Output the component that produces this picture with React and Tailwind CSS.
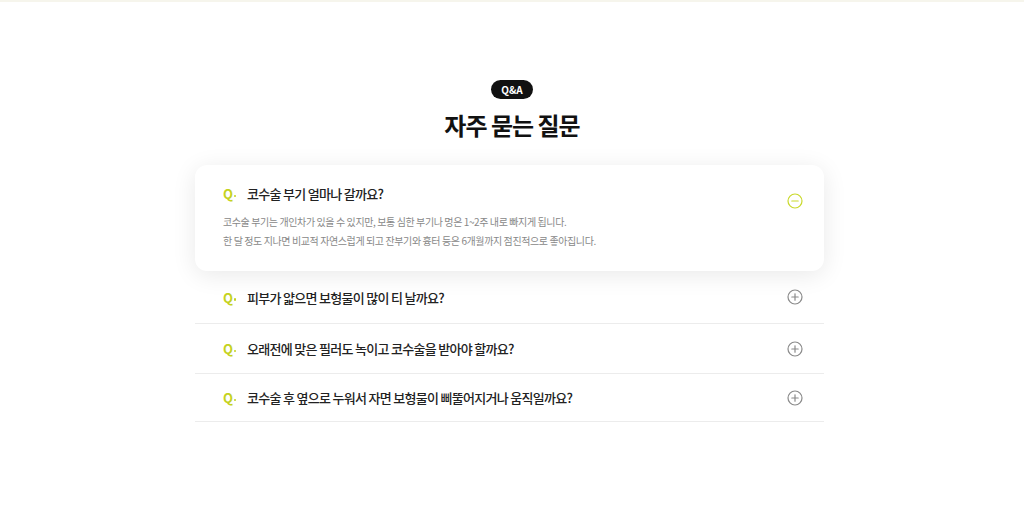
import { useState } from "react";

// ─── FAQ data ────────────────────────────────────────────────────────────────
const FAQS = [
  {
    q: "코수술 부기 얼마나 갈까요?",
    a: [
      "코수술 부기는 개인차가 있을 수 있지만, 보통 심한 부기나 멍은 1~2주 내로 빠지게 됩니다.",
      "한 달 정도 지나면 비교적 자연스럽게 되고 잔부기와 흉터 등은 6개월까지 점진적으로 좋아집니다.",
    ],
  },
  { q: "피부가 얇으면 보형물이 많이 티 날까요?", a: ["보형물의 종류와 크기를 피부 두께에 맞게 선택하면 자연스러운 결과를 얻을 수 있습니다."] },
  { q: "오래전에 맞은 필러도 녹이고 코수술을 받아야 할까요?", a: ["상담을 통해 필러 잔여 상태를 확인한 뒤 결정하게 됩니다."] },
  { q: "코수술 후 옆으로 누워서 자면 보형물이 삐뚤어지거나 움직일까요?", a: ["회복 초기에는 바른 자세로 주무시는 것을 권장드립니다."] },
];

const ToggleIcon = ({ open }) => {
  const c = open ? "#c9d92b" : "#8a8a8a";
  return (
    <svg width="16" height="16" viewBox="0 0 16 16" fill="none">
      <circle cx="8" cy="8" r="7" stroke={c} strokeWidth="1.2" />
      <path d="M4.8 8h6.4" stroke={c} strokeWidth="1.2" strokeLinecap="round" />
      {!open && <path d="M8 4.8v6.4" stroke={c} strokeWidth="1.2" strokeLinecap="round" />}
    </svg>
  );
};

const QMark = () => (
  <span className="flex items-end w-[24px] shrink-0 text-[13px] font-semibold leading-none text-[#c5d21f]">
    Q<span className="w-[2.5px] h-[2.5px] rounded-full bg-[#c5d21f] ml-[0.5px] mb-[3px]" />
  </span>
);

export default function App() {
  const [openIdx, setOpenIdx] = useState(0);

  return (
    <div
      className="w-[1024px] h-[520px] bg-white border-t-2 border-[#f6f5ec] flex flex-col items-center"
      style={{ fontFamily: '"Noto Sans CJK KR", "Noto Sans", sans-serif' }}
    >
      {/* ── Header ── */}
      <div className="mt-[78px] h-[19px] px-[10px] rounded-full bg-[#111] text-white text-[10px] font-bold flex items-center leading-none">
        Q&amp;A
      </div>
      <h2 className="mt-[6px] text-[24px] font-semibold text-[#111] tracking-[-1px] leading-[40px]">
        자주 묻는 질문
      </h2>

      {/* ── FAQ list ── */}
      <div className="w-[629px] self-start ml-[195px] mt-[20px]">
        {FAQS.map((item, i) => {
          const isOpen = openIdx === i;
          return (
            <div
              key={i}
              className={
                isOpen
                  ? "bg-white rounded-[12px] shadow-[0_4px_24px_rgba(0,0,0,0.09)] pl-[28px] pr-[21px] pt-[18px] pb-[21px]"
                  : `border-b border-[#ececec] pl-[28px] pr-[21px] flex items-center ${i === 1 ? "h-[53px]" : i === 3 ? "h-[48px]" : "h-[50px]"}`
              }
            >
              <button
                onClick={() => setOpenIdx(isOpen ? -1 : i)}
                className={`w-full flex text-left ${isOpen ? "items-start" : "items-center h-full"}`}
              >
                <span className="flex items-center h-[21px]">
                  <QMark />
                </span>
                <span className="flex-1 text-[13px] leading-[21px] font-medium text-[#222] tracking-[-0.7px]">
                  {item.q}
                </span>
                <span className={isOpen ? "mt-[10px] -mb-[5px]" : ""}>
                  <ToggleIcon open={isOpen} />
                </span>
              </button>
              {isOpen && (
                <div className="mt-[8px] text-[10px] leading-[19px] text-[#888] tracking-[-0.4px]">
                  {item.a.map((line, k) => (
                    <p key={k}>{line}</p>
                  ))}
                </div>
              )}
            </div>
          );
        })}
      </div>
    </div>
  );
}
